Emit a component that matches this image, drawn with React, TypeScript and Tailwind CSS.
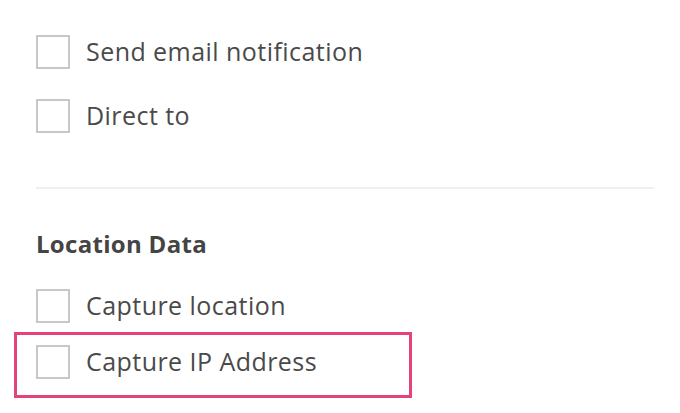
import React from 'react';

function Checkbox() {
  return <span className="block w-[34px] h-[34px] shrink-0 border-2 border-[#c8c8cc] bg-white" />;
}

function CheckRow({ label }: { label: string }) {
  return (
    <label className="flex items-center gap-[16px] h-[34px]">
      <Checkbox />
      <span className="mb-[3px] text-[25px] leading-[34px] tracking-[0.45px] text-[#4a4a4a]">{label}</span>
    </label>
  );
}

export default function App() {
  return (
    <div className="w-[680px] h-[413px] bg-white pl-[36px] pt-[35px] flex flex-col overflow-hidden font-['Open_Sans',sans-serif]">
      <CheckRow label="Send email notification" />
      <div className="mt-[30px]">
        <CheckRow label="Direct to" />
      </div>

      <div className="mt-[54px] w-[618px] h-[2px] bg-[#f0f0f0]" />

      <h3 className="mt-[41px] text-[24px] leading-[28px] tracking-[0.3px] font-bold text-[#444]">Location Data</h3>

      <div className="mt-[31px]">
        <CheckRow label="Capture location" />
      </div>
      <div className="mt-[9px] -ml-[22px] w-[398px] h-[66px] border-[3px] border-[#e6427a] pl-[19px] pt-[10px]">
        <CheckRow label="Capture IP Address" />
      </div>
    </div>
  );
}
